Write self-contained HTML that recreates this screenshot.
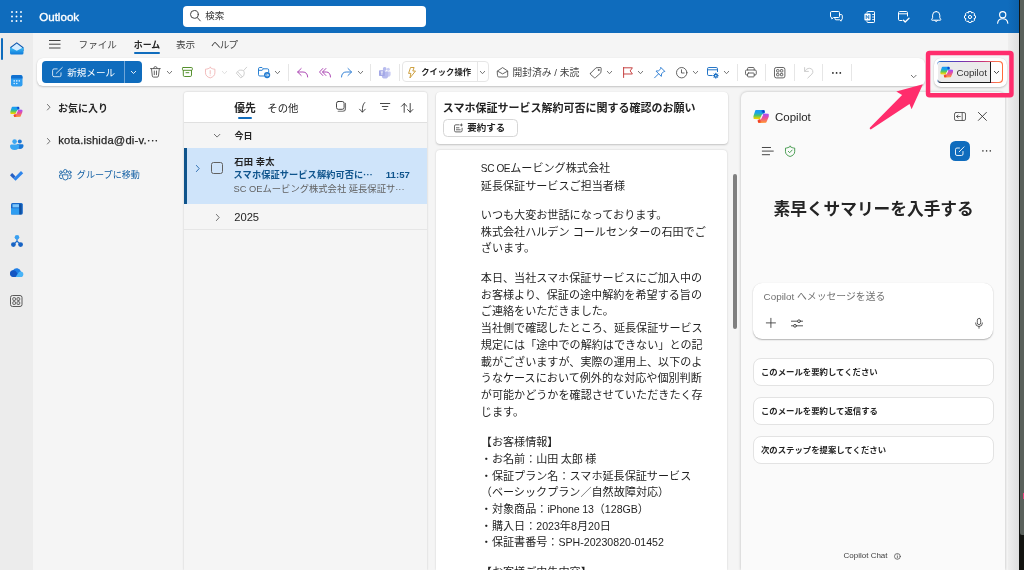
<!DOCTYPE html>
<html lang="ja">
<head>
<meta charset="utf-8">
<title>Outlook</title>
<style>
*{box-sizing:border-box;margin:0;padding:0}
html,body{width:1024px;height:570px;overflow:hidden}
body{position:relative;background:#f5f5f5;font-family:"Liberation Sans","Noto Sans CJK JP",sans-serif;color:#242424;font-size:12px}
#app{position:absolute;left:0;top:0;width:1024px;height:570px;will-change:transform}
.a{position:absolute}
.t{position:absolute;white-space:nowrap;line-height:1}
svg{position:absolute;overflow:visible}
#hdr{position:absolute;left:0;top:0;width:1018.8px;height:32.7px;background:linear-gradient(90deg,#0f6cbd 0,#0f6cbd 1008px,#0c62ad 1018px)}
#search{position:absolute;left:183.2px;top:5.6px;width:242.6px;height:21.6px;background:#fff;border-radius:4px}
#rail{position:absolute;left:0;top:33px;width:33px;height:537px;background:#ececec}
#ribbon{position:absolute;left:37px;top:58px;width:888px;height:28px;background:#fff;border-radius:6px;box-shadow:0 1px 2px rgba(0,0,0,.2),0 0 1px rgba(0,0,0,.12)}
.sep{position:absolute;top:6px;width:1px;height:16.5px;background:#e6e6e6}
#mlist{position:absolute;left:184px;top:92px;width:243px;height:478px;background:#f5f5f5;border-radius:3px 3px 0 0;box-shadow:0 0 2px rgba(0,0,0,.22);overflow:hidden}
#rh{position:absolute;left:436px;top:92px;width:292px;height:52px;background:#fff;border-radius:4px;box-shadow:0 1px 2px rgba(0,0,0,.2),0 0 1px rgba(0,0,0,.12)}
#rb{position:absolute;left:436px;top:150px;width:291px;height:420px;background:#fff;border-radius:4px 4px 0 0;box-shadow:0 0 2px rgba(0,0,0,.18);overflow:hidden}
#rb .p{position:absolute;left:44.8px;font-size:11.1px;line-height:16.7px;color:#1f1f1f;white-space:nowrap}
#rb .l{font-size:10.6px}
#cop{position:absolute;left:741px;top:92px;width:264.2px;height:478px;background:#fafafa;border-radius:6px 6px 0 0;box-shadow:0 0 3px rgba(0,0,0,.25)}
.sug{position:absolute;left:12px;width:241px;height:28px;background:#fff;border:1px solid #e3e3e3;border-radius:8px}
.sug span{position:absolute;left:7px;top:9.4px;font-size:8.4px;font-weight:bold;color:#242424;white-space:nowrap;line-height:1}
</style>
</head>
<body>
<div id="app">
<div class="a" style="left:1007.5px;top:32.7px;width:11.5px;height:537.3px;background:linear-gradient(90deg,#eeeeee,#e8e8e8 40%,#dedede)"></div>
<div class="a" style="left:1018.8px;top:0;width:5.2px;height:570px;background:#121310"></div>
<div class="a" style="left:1019.8px;top:0;width:4.2px;height:534.5px;background:#59605b;border-radius:0 0 0 2px"></div>
<div class="a" style="left:1022.8px;top:492.5px;width:1.2px;height:6.5px;background:#e8407a"></div>
<div id="hdr">
<svg style="left:10.5px;top:10.5px" width="11" height="11" viewBox="0 0 11 11" fill="#fff"><circle cx="1.0" cy="1.0" r="0.95"/><circle cx="1.0" cy="5.5" r="0.95"/><circle cx="1.0" cy="10.0" r="0.95"/><circle cx="5.5" cy="1.0" r="0.95"/><circle cx="5.5" cy="5.5" r="0.95"/><circle cx="5.5" cy="10.0" r="0.95"/><circle cx="10.0" cy="1.0" r="0.95"/><circle cx="10.0" cy="5.5" r="0.95"/><circle cx="10.0" cy="10.0" r="0.95"/></svg>
<div class="t" id="ttl" style="left:39.2px;top:11.2px;color:#fff;font-size:11.6px;-webkit-text-stroke:.35px #fff">Outlook</div>
<div id="search">
<svg style="left:7px;top:4.3px" width="10.6" height="11.5" viewBox="0 0 10.6 11.5" fill="none" stroke="#424242" stroke-width="1" stroke-linecap="round"><circle cx="4.4" cy="4.4" r="3.9"/><path d="M7.3 7.5l3 3.4"/></svg>
<div class="t" style="left:22px;top:5.4px;font-size:9.5px;color:#333">検索</div>
</div>
<svg style="left:830px;top:11px" width="12.5" height="10.5" viewBox="0 0 12.5 10.5" fill="none" stroke="#fff" stroke-width="1" stroke-linejoin="round" stroke-linecap="round"><path d="M.5 1.5a1 1 0 0 1 1-1h7a1 1 0 0 1 1 1v4a1 1 0 0 1-1 1H3.5L1.8 8V6.5h-.3a1 1 0 0 1-1-1z"/><path d="M5 6.6v1.2a1 1 0 0 0 1 1h3.7l1.4 1.4V8.8h.2a1 1 0 0 0 1-1V4.6a1 1 0 0 0-1-1H9.6"/></svg>
<svg style="left:863.5px;top:10.5px" width="11" height="12" viewBox="0 0 11 12" fill="none" stroke="#fff" stroke-width="1" stroke-linejoin="round" stroke-linecap="round"><path d="M3 2V1.2a.7.7 0 0 1 .7-.7h6.1a.7.7 0 0 1 .7.7v9.6a.7.7 0 0 1-.7.7H3.7a.7.7 0 0 1-.7-.7V10"/><path d="M10.5 3.5H8.5M10.5 6H8.5M10.5 8.5H8.5" stroke-width=".8"/><rect x=".4" y="2.6" width="6.2" height="6.8" rx="1" fill="#fff" stroke="none"/><path d="M2.2 7.6V4.4L4.8 7.6V4.4" stroke="#0f6cbd" stroke-width=".9"/></svg>
<svg style="left:898px;top:10.5px" width="11.5" height="12" viewBox="0 0 11.5 12" fill="none" stroke="#fff" stroke-width="1" stroke-linejoin="round" stroke-linecap="round"><path d="M9.5 5V1.7A1.2 1.2 0 0 0 8.3.5H1.7A1.2 1.2 0 0 0 .5 1.7v6.6A1.2 1.2 0 0 0 1.7 9.5H4"/><path d="M.5 2.8h9"/><path d="M5.5 9.3l1.7 1.7L11 7.2" stroke-width="1.3"/></svg>
<svg style="left:931px;top:10.5px" width="10.5" height="12" viewBox="0 0 10.5 12" fill="none" stroke="#fff" stroke-width="1" stroke-linejoin="round" stroke-linecap="round"><path d="M5.2.5a3.6 3.6 0 0 0-3.6 3.6v2.7L.6 8.6a.4.4 0 0 0 .4.6h8.4a.4.4 0 0 0 .4-.6l-1-1.8V4.1A3.6 3.6 0 0 0 5.2.5z"/><path d="M3.9 9.6a1.4 1.4 0 0 0 2.6 0"/></svg>
<svg style="left:963.5px;top:10.5px" width="12" height="12" viewBox="0 0 12 12" fill="none" stroke="#fff" stroke-width="1" stroke-linejoin="round" stroke-linecap="round"><path d="M4.89 0.51L7.11 0.51L7.63 2.02L7.66 2.03L9.09 1.33L10.67 2.91L9.97 4.34L9.98 4.37L11.49 4.89L11.49 7.11L9.98 7.63L9.97 7.66L10.67 9.09L9.09 10.67L7.66 9.97L7.63 9.98L7.11 11.49L4.89 11.49L4.37 9.98L4.34 9.97L2.91 10.67L1.33 9.09L2.03 7.66L2.02 7.63L0.51 7.11L0.51 4.89L2.02 4.37L2.03 4.34L1.33 2.91L2.91 1.33L4.34 2.03L4.37 2.02Z"/><circle cx="6" cy="6" r="1.6"/></svg>
<svg style="left:997px;top:10.5px" width="11.5" height="12.5" viewBox="0 0 11.5 12.5" fill="none" stroke="#fff" stroke-width="1.15" stroke-linecap="round"><circle cx="5.7" cy="3.7" r="3.1"/><path d="M.6 12.2c.3-3 2.3-4.4 5.1-4.4s4.8 1.4 5.1 4.4"/></svg>
</div>
<div id="rail">
<div class="a" style="left:1.2px;top:5px;width:2px;height:21.6px;border-radius:1px;background:#0f6cbd"></div>
<svg style="left:10px;top:8.8px" width="13.5" height="12.6" viewBox="0 0 13.5 12.6" ><defs><linearGradient id="mg" x1="0" y1="0" x2="0" y2="1"><stop offset="0" stop-color="#3fc0f8"/><stop offset="1" stop-color="#0f78d8"/></linearGradient></defs><path d="M0 5.3L6.75.2 13.5 5.3V9H0z" fill="#0c56ad"/><path d="M1.5 5.4L6.75 1.6 12 5.4V9H1.5z" fill="#d4ecff"/><path d="M0 5.3l6.75 3.5 6.75-3.5V11.1a1.5 1.5 0 0 1-1.5 1.5H1.5A1.5 1.5 0 0 1 0 11.1z" fill="url(#mg)"/></svg>
<svg style="left:11px;top:42px" width="11.5" height="11.5" viewBox="0 0 11.5 11.5" ><rect width="11.5" height="11.5" rx="2" fill="#2f9df0"/><path d="M0 2a2 2 0 0 1 2-2h7.5a2 2 0 0 1 2 2v1.5H0z" fill="#1170cf"/><g fill="#d6edff"><circle cx="3.2" cy="5.9" r=".8"/><circle cx="5.75" cy="5.9" r=".8"/><circle cx="8.3" cy="5.9" r=".8"/><circle cx="3.2" cy="8.5" r=".8"/><circle cx="5.75" cy="8.5" r=".8"/></g></svg>
<svg style="left:10.2px;top:73px" width="12.6" height="11.8" viewBox="0 0 16 15" ><defs>
<linearGradient id="ar" x1="0" y1="0" x2="0" y2="1"><stop offset="0" stop-color="#1a9cf2"/><stop offset=".3" stop-color="#1aa6e6"/><stop offset=".6" stop-color="#4cc46a"/><stop offset="1" stop-color="#ecd200"/></linearGradient>
<linearGradient id="br" x1="0" y1="0" x2="0" y2="1"><stop offset="0" stop-color="#a94df2"/><stop offset=".45" stop-color="#ea4f9a"/><stop offset="1" stop-color="#ff8f3a"/></linearGradient>
<radialGradient id="cr" cx="10.6" cy="2.2" r="2.6" gradientUnits="userSpaceOnUse"><stop offset="0" stop-color="#0a38cc"/><stop offset="1" stop-color="#0a38cc" stop-opacity="0"/></radialGradient>
<radialGradient id="dr" cx="5.6" cy="12.6" r="3" gradientUnits="userSpaceOnUse"><stop offset="0" stop-color="#f03a22"/><stop offset="1" stop-color="#f03a22" stop-opacity="0"/></radialGradient>
</defs>
<path d="M10.6 5.2L15 5.5 15 7.4 12.7 12.9 6 13.3 5.4 11.7 8.3 10z" fill="url(#br)" stroke="url(#br)" stroke-width="1.6" stroke-linejoin="round"/>
<path d="M10.6 5.2L15 5.5 15 7.4 12.7 12.9 6 13.3 5.4 11.7 8.3 10z" fill="url(#dr)" stroke="url(#dr)" stroke-width="1.6" stroke-linejoin="round"/>
<path d="M3 1.8L10.9 1.8 11.2 3.4 8.5 4.7 6.3 9.5 1.4 9.3 1.2 7.6z" fill="url(#ar)" stroke="url(#ar)" stroke-width="1.6" stroke-linejoin="round"/>
<path d="M3 1.8L10.9 1.8 11.2 3.4 8.5 4.7 6.3 9.5 1.4 9.3 1.2 7.6z" fill="url(#cr)" stroke="url(#cr)" stroke-width="1.6" stroke-linejoin="round"/>
<path d="M9.3 5.6L10.2 5.7 8 10.2 7 10.5z" fill="#fff"/>
</svg>
<svg style="left:10px;top:106px" width="13.5" height="11" viewBox="0 0 13.5 11" ><circle cx="9.8" cy="2.5" r="2" fill="#1a78d6"/><path d="M6.5 6.5c0-.8.6-1.3 1.3-1.3h4.4c.7 0 1.3.5 1.3 1.3 0 2.2-1.3 3.5-3.5 3.5S6.5 8.7 6.5 6.5z" fill="#1a78d6"/><circle cx="4.6" cy="2.6" r="2.3" fill="#3aa6f2"/><path d="M0 7c0-.9.7-1.5 1.5-1.5h6.2c.8 0 1.5.6 1.5 1.5 0 2.5-1.8 4-4.6 4S0 9.5 0 7z" fill="#3aa6f2"/></svg>
<svg style="left:9.8px;top:137px" width="13.2" height="10.5" viewBox="0 0 13.2 10.5" ><path d="M0 5.3L2.2 3.1 5.6 6.5 3.4 8.7z" fill="#2560c4"/><path d="M3.4 8.7L11 1l2.2 2.2-7.6 7.6z" fill="#2f86ec"/></svg>
<svg style="left:10.6px;top:169.5px" width="11.8" height="11.5" viewBox="0 0 11.8 11.5" ><rect x="0" y="0" width="11.8" height="11.5" rx="1.5" fill="#1668c9"/><rect x="1.5" y="1.2" width="6.5" height="3.2" fill="#7cc6fb"/><rect x="0" y="5.2" width="8.3" height="6.3" fill="#2f9df0"/><rect x="8.3" y="1.2" width="2.2" height="10.3" fill="#0e4e9e"/></svg>
<svg style="left:10.5px;top:201.5px" width="12" height="12" viewBox="0 0 12 12" ><path d="M6 3v3M2.5 9.5L6 6l3.5 3.5" stroke="#1e6fd0" stroke-width="1.2" fill="none"/><circle cx="6" cy="2.3" r="2.3" fill="#3aa0f0"/><circle cx="2.4" cy="9.6" r="2.4" fill="#1763c4"/><circle cx="9.6" cy="9.6" r="2.4" fill="#1763c4"/></svg>
<svg style="left:9.8px;top:234.5px" width="13.4" height="9" viewBox="0 0 13.4 9" ><path d="M3.4 9a3.4 3.4 0 0 1-.4-6.7A4.4 4.4 0 0 1 11 3.8 2.7 2.7 0 0 1 10.8 9z" fill="#1f7fe6"/><path d="M3.4 9a3.4 3.4 0 0 1 0-6.8c1.5 0 2.5.8 3.2 2L9.4 9z" fill="#1456c2"/><path d="M5.6 9l3-4.4a2.7 2.7 0 1 1 2.2 4.4z" fill="#49b4f7"/></svg>
<svg style="left:10.3px;top:262px" width="12.5" height="12" viewBox="0 0 12.5 12" fill="none" stroke="#4a4a4a" stroke-width=".9"><rect x=".5" y=".5" width="11.5" height="11" rx="2"/><rect x="2.8" y="2.7" width="2.7" height="2.7" rx=".7"/><rect x="7" y="2.7" width="2.7" height="2.7" rx=".7"/><rect x="2.8" y="6.7" width="2.7" height="2.7" rx=".7"/><rect x="7" y="6.7" width="2.7" height="2.7" rx=".7"/></svg>
</div>
<svg style="left:49px;top:40px" width="11.5" height="8.5" viewBox="0 0 11.5 8.5" stroke="#424242" stroke-width="1"><path d="M0 .5h11.5M0 4.2h11.5M0 8h11.5"/></svg>
<div class="t" id="tb1" style="left:78.6px;top:39.5px;font-size:9.6px;color:#424242">ファイル</div>
<div class="t" id="tb2" style="left:133.8px;top:41px;font-size:8.9px;font-weight:bold;color:#242424">ホーム</div>
<div class="a" style="left:134px;top:51.5px;width:26px;height:2px;background:#0f6cbd;border-radius:1px"></div>
<div class="t" id="tb3" style="left:176px;top:39.5px;font-size:9.6px;color:#424242">表示</div>
<div class="t" id="tb4" style="left:211px;top:39.5px;font-size:9.6px;letter-spacing:-.8px;color:#424242">ヘルプ</div>
<div id="ribbon">
<div class="a" style="left:5.3px;top:3px;width:99.7px;height:22px;background:#0f6cbd;border-radius:4px"></div><div class="a" style="left:86.6px;top:3px;width:1.2px;height:22px;background:#6fa6d8"></div>

<svg style="left:15.4px;top:8.8px" width="11" height="10.5" viewBox="0 0 11 10.5" fill="none" stroke="#fff" stroke-opacity=".92" stroke-width=".85" stroke-linejoin="round" stroke-linecap="round"><path d="M9 5.8V8.2a1.5 1.5 0 0 1-1.5 1.5H2.1a1.5 1.5 0 0 1-1.5-1.5V3.4a1.5 1.5 0 0 1 1.5-1.5H5.2"/><path d="M4.2 6.4L10.3.5"/></svg>
<div class="t" id="nm" style="left:30.2px;top:10px;font-size:9.6px;color:#fff">新規メール</div>
<svg style="left:93.8px;top:12.9px" width="5" height="2.8" viewBox="0 0 5 2.8" fill="none" stroke="#fff" stroke-width="0.9" stroke-linecap="round" stroke-linejoin="round"><path d="M0.3 0.3L2.5 2.5L4.7 0.3"/></svg>
<svg style="left:113.2px;top:7.9px" width="10.8" height="11.5" viewBox="0 0 10.8 11.5" fill="none" stroke="#4a4a4a" stroke-width=".85" stroke-linejoin="round" stroke-linecap="round"><path d="M.5 2.6h9.8M3.6 2.4a1.8 1.8 0 0 1 3.6 0M1.5 2.8l.8 7.2a1.3 1.3 0 0 0 1.3 1.1h3.6a1.3 1.3 0 0 0 1.3-1.1l.8-7.2M4.3 5v3.7M6.5 5v3.7"/></svg>
<svg style="left:129.8px;top:13.4px" width="5" height="3" viewBox="0 0 5 3" fill="none" stroke="#616161" stroke-width="0.85" stroke-linecap="round" stroke-linejoin="round"><path d="M0.3 0.3L2.5 2.7L4.7 0.3"/></svg>
<svg style="left:144.8px;top:9px" width="10.8" height="10" viewBox="0 0 10.8 10" fill="none" stroke="#4c8a22" stroke-width=".95" stroke-linejoin="round" stroke-linecap="round"><rect x=".5" y=".5" width="9.8" height="2.8" rx=".7"/><path d="M1.3 3.5v4.7a1.3 1.3 0 0 0 1.3 1.3h5.6a1.3 1.3 0 0 0 1.3-1.3V3.5M4 5.7h2.8"/></svg>
<svg style="left:167.6px;top:8.6px" width="10.4" height="11.4" viewBox="0 0 10.4 11.4" fill="none" stroke="#f1b6b6" stroke-width=".9" stroke-linejoin="round" stroke-linecap="round"><path d="M5.2.5C6.5 1.6 8 2.1 9.9 2.2v3.6c0 2.6-1.8 4.3-4.7 5.1C2.3 10.1.5 8.4.5 5.8V2.2C2.4 2.1 3.9 1.6 5.2.5z"/><path d="M5.2 3.6v3M5.2 8.1v.1"/></svg>
<svg style="left:184.7px;top:13.4px" width="5" height="3" viewBox="0 0 5 3" fill="none" stroke="#dcdcdc" stroke-width="0.85" stroke-linecap="round" stroke-linejoin="round"><path d="M0.3 0.3L2.5 2.7L4.7 0.3"/></svg>
<svg style="left:199px;top:8.5px" width="11.2" height="11.5" viewBox="0 0 11.2 11.5" fill="none" stroke="#c8c8c8" stroke-width=".85" stroke-linejoin="round" stroke-linecap="round"><path d="M10.7.2L7.6 3.6M5.2 3.1c1.8-.2 3 1 3.1 2.8L7.8 8.6 4.8 11 .3 6.1 3 3.4zM1.7 4.8l4.5 4.9"/></svg>
<svg style="left:221px;top:8.7px" width="12.8" height="11.6" viewBox="0 0 12.8 11.6" ><path d="M6.5 9H1.8A1.3 1.3 0 0 1 .5 7.7V1.8A1.3 1.3 0 0 1 1.8.5h2.2l1.3 1.3h4.1a1.3 1.3 0 0 1 1.3 1.3V5.5M.5 3.3h3.7l1.1-1.5" fill="none" stroke="#1f7ad1" stroke-width=".95" stroke-linejoin="round"/><circle cx="9.1" cy="8.1" r="3.1" fill="#1f7ad1"/><path d="M7.6 8.1h2.8M9.3 6.9l1.2 1.2-1.2 1.2" fill="none" stroke="#fff" stroke-width=".8" stroke-linecap="round" stroke-linejoin="round"/></svg>
<svg style="left:238.1px;top:13.4px" width="5" height="3" viewBox="0 0 5 3" fill="none" stroke="#616161" stroke-width="0.85" stroke-linecap="round" stroke-linejoin="round"><path d="M0.3 0.3L2.5 2.7L4.7 0.3"/></svg>
<div class="sep" style="left:250.7px"></div>
<svg style="left:259.7px;top:9.5px" width="11.2" height="9.5" viewBox="0 0 11.2 9.5" fill="none" stroke="#a83fb0" stroke-width=".95" stroke-linejoin="round" stroke-linecap="round"><path d="M4.2.5L.6 4l3.6 3.5M.8 4h5.2c2.8 0 4.6 1.8 4.7 5"/></svg>
<svg style="left:281.5px;top:9.5px" width="12" height="9.5" viewBox="0 0 12 9.5" fill="none" stroke="#a83fb0" stroke-width=".95" stroke-linejoin="round" stroke-linecap="round"><path d="M3.8.5L.5 4l3.3 3.5M6.9.5L3.5 4l3.4 3.5M3.8 4h3.5c2.6 0 4.1 1.8 4.2 5"/></svg>
<svg style="left:304px;top:9.5px" width="11.2" height="9.5" viewBox="0 0 11.2 9.5" fill="none" stroke="#2b7cd3" stroke-width=".95" stroke-linejoin="round" stroke-linecap="round"><path d="M7 .5L10.6 4 7 7.5M10.4 4H5.2C2.4 4 .6 5.8.5 9"/></svg>
<svg style="left:320.5px;top:13.4px" width="5" height="3" viewBox="0 0 5 3" fill="none" stroke="#616161" stroke-width="0.85" stroke-linecap="round" stroke-linejoin="round"><path d="M0.3 0.3L2.5 2.7L4.7 0.3"/></svg>
<div class="sep" style="left:333.3px"></div>
<svg style="left:342px;top:8.8px" width="11.6" height="11" viewBox="0 0 11.6 11" ><circle cx="9.3" cy="2.3" r="1.5" fill="#c9ccf3"/><path d="M7.5 4.4h3.3a.8.8 0 0 1 .8.8v2.8a2.1 2.1 0 0 1-4.1 0z" fill="#c9ccf3"/><circle cx="5.7" cy="1.9" r="1.9" fill="#b7bbee"/><path d="M2.8 4.4h5.6a.8.8 0 0 1 .8.8v3.2a3.2 3.2 0 0 1-6.4 0z" fill="#b7bbee"/><rect x="0" y="3.3" width="5.8" height="5.8" rx=".8" fill="#a2a7e6"/><path d="M1.7 4.9h2.4M2.9 4.9v3" stroke="#fff" stroke-width=".8" fill="none"/></svg>
<div class="sep" style="left:361.6px"></div>
<div class="a" style="left:365.4px;top:3.4px;width:86.6px;height:21px;border:1px solid #e6e6e6;border-radius:4px"></div>
<div class="a" style="left:440px;top:3.4px;width:1px;height:21px;background:#e6e6e6"></div>
<svg style="left:371px;top:8.5px" width="8" height="11.5" viewBox="0 0 8 11.5" fill="none" stroke="#c8962e" stroke-width=".9" stroke-linejoin="round"><path d="M2.5.5h3.6L4.8 4h2.7L1.9 11l1-4.6H.6z"/></svg>
<div class="t" id="qa" style="left:384.2px;top:9.8px;font-size:8.3px;font-weight:bold;color:#242424">クイック操作</div>
<svg style="left:443.1px;top:13.4px" width="5" height="3" viewBox="0 0 5 3" fill="none" stroke="#616161" stroke-width="0.85" stroke-linecap="round" stroke-linejoin="round"><path d="M0.3 0.3L2.5 2.7L4.7 0.3"/></svg>
<svg style="left:460.2px;top:9px" width="11.2" height="10.5" viewBox="0 0 11.2 10.5" fill="none" stroke="#4a4a4a" stroke-width=".85" stroke-linejoin="round" stroke-linecap="round"><path d="M.5 4L5.6.6 10.7 4v4.7a1.3 1.3 0 0 1-1.3 1.3H1.8A1.3 1.3 0 0 1 .5 8.7z"/><path d="M.7 4.2l4.9 2.7 4.9-2.7"/></svg>
<div class="t" id="rd" style="left:475.6px;top:9.6px;font-size:9.75px;color:#424242">開封済み / 未読</div>
<svg style="left:552.7px;top:8.8px" width="11.8" height="11" viewBox="0 0 11.8 11" fill="none" stroke="#4a4a4a" stroke-width=".85" stroke-linejoin="round" stroke-linecap="round"><path d="M.6 6.2L6 .8 10.2.5a.9.9 0 0 1 1 1L10.9 5.7 5.5 10.6a.9.9 0 0 1-1.3 0L.6 7.5a.9.9 0 0 1 0-1.3z"/><circle cx="8.6" cy="3" r=".5"/></svg>
<svg style="left:569.5px;top:13.4px" width="5" height="3" viewBox="0 0 5 3" fill="none" stroke="#616161" stroke-width="0.85" stroke-linecap="round" stroke-linejoin="round"><path d="M0.3 0.3L2.5 2.7L4.7 0.3"/></svg>
<svg style="left:585.5px;top:9px" width="10.2" height="11" viewBox="0 0 10.2 11" fill="none" stroke="#c43a3a" stroke-width=".95" stroke-linejoin="round" stroke-linecap="round"><path d="M.6.5v10M.6.8h8.8L7.2 3.9 9.4 7H.6"/></svg>
<svg style="left:601.3px;top:13.4px" width="5" height="3" viewBox="0 0 5 3" fill="none" stroke="#616161" stroke-width="0.85" stroke-linecap="round" stroke-linejoin="round"><path d="M0.3 0.3L2.5 2.7L4.7 0.3"/></svg>
<svg style="left:616.5px;top:8.8px" width="11.4" height="11.4" viewBox="0 0 11.4 11.4" fill="none" stroke="#2b7cd3" stroke-width=".95" stroke-linejoin="round" stroke-linecap="round"><path d="M7 .6l3.8 3.8-1.3.4L7.6 6.8 7.3 9.4 2 4.1l2.6-.3L6.6 1.9zM4.4 7L.6 10.8"/></svg>
<svg style="left:638.6px;top:8.8px" width="11.4" height="11.4" viewBox="0 0 11.4 11.4" fill="none" stroke="#4a4a4a" stroke-width=".85" stroke-linejoin="round" stroke-linecap="round"><circle cx="5.7" cy="5.7" r="5.2"/><path d="M5.5 2.8v3.2h2.6"/></svg>
<svg style="left:655.5px;top:13.4px" width="5" height="3" viewBox="0 0 5 3" fill="none" stroke="#616161" stroke-width="0.85" stroke-linecap="round" stroke-linejoin="round"><path d="M0.3 0.3L2.5 2.7L4.7 0.3"/></svg>
<svg style="left:670.2px;top:8.8px" width="12" height="11.5" viewBox="0 0 12 11.5" ><path d="M5.5 8.5H1.8A1.3 1.3 0 0 1 .5 7.2V1.8A1.3 1.3 0 0 1 1.8.5h7.4a1.3 1.3 0 0 1 1.3 1.3V5M.5 2.8h10" fill="none" stroke="#1a6fc4" stroke-width=".95"/><circle cx="8.8" cy="8.7" r="2.1" fill="#1a6fc4"/><path d="M8.8 5.8v5.8M5.9 8.7h5.8M6.8 6.7l4 4M10.8 6.7l-4 4" stroke="#1a6fc4" stroke-width="1"/><circle cx="8.8" cy="8.7" r=".8" fill="#fff"/></svg>
<svg style="left:687.3px;top:13.4px" width="5" height="3" viewBox="0 0 5 3" fill="none" stroke="#616161" stroke-width="0.85" stroke-linecap="round" stroke-linejoin="round"><path d="M0.3 0.3L2.5 2.7L4.7 0.3"/></svg>
<div class="sep" style="left:699.5px"></div>
<svg style="left:708px;top:9.2px" width="11.8" height="10.4" viewBox="0 0 11.8 10.4" fill="none" stroke="#4a4a4a" stroke-width=".85" stroke-linejoin="round" stroke-linecap="round"><path d="M2.6 3V1.5a1 1 0 0 1 1-1h4.6a1 1 0 0 1 1 1V3M2.6 8H1.7A1.2 1.2 0 0 1 .5 6.8V4.2A1.2 1.2 0 0 1 1.7 3h8.4a1.2 1.2 0 0 1 1.2 1.2v2.6A1.2 1.2 0 0 1 10.1 8H9.2"/><rect x="2.6" y="6" width="6.6" height="3.9" rx=".8"/></svg>
<div class="sep" style="left:728px"></div>
<svg style="left:737px;top:8.8px" width="11.4" height="11.4" viewBox="0 0 11.4 11.4" fill="none" stroke="#4a4a4a" stroke-width=".85"><rect x=".5" y=".5" width="10.4" height="10.4" rx="1.8"/><rect x="2.6" y="2.6" width="2.4" height="2.4" rx=".6"/><rect x="6.4" y="2.6" width="2.4" height="2.4" rx=".6"/><rect x="2.6" y="6.4" width="2.4" height="2.4" rx=".6"/><rect x="6.4" y="6.4" width="2.4" height="2.4" rx=".6"/></svg>
<div class="sep" style="left:756.5px"></div>
<svg style="left:766.9px;top:8.8px" width="9.4" height="11.4" viewBox="0 0 9.4 11.4" fill="none" stroke="#c6c6c6" stroke-width=".9" stroke-linejoin="round" stroke-linecap="round"><path d="M.6.6v3.8h3.8M.8 4.2C2 2.3 3.6 1.3 5.5 1.3a3.4 3.4 0 0 1 2.4 5.8L3.8 11"/></svg>
<div class="sep" style="left:785px"></div>
<svg style="left:795.2px;top:13.6px" width="9.2" height="1.8" viewBox="0 0 9.2 1.8" fill="#242424"><circle cx=".9" cy=".9" r=".9"/><circle cx="4.6" cy=".9" r=".9"/><circle cx="8.3" cy=".9" r=".9"/></svg>
<div class="sep" style="left:813.7px"></div>
<svg style="left:874.1px;top:16.7px" width="5.4" height="3" viewBox="0 0 5.4 3" fill="none" stroke="#616161" stroke-width="0.9" stroke-linecap="round" stroke-linejoin="round"><path d="M0.3 0.3L2.7 2.7L5.1 0.3"/></svg>
</div>
<div class="a" style="left:933.5px;top:57.5px;width:73px;height:29px;background:#fff;border-radius:7px;box-shadow:0 1px 2px rgba(0,0,0,.2),0 0 1px rgba(0,0,0,.12)"></div>
<div class="a" style="left:936.7px;top:60.9px;width:66.6px;height:22.1px;border-radius:4px;background:linear-gradient(90deg,#1a62c4 0%,#1a62c4 4%,#6a35b8 35%,#c8327a 70%,#ff7a4a 92%,#ff6a3a 100%)"></div>
<div class="a" style="left:937.4px;top:61.8px;width:65px;height:20.4px;border-radius:3.4px;background:#fff"></div>
<div class="a" style="left:937.6px;top:61.9px;width:53.3px;height:21.1px;border-radius:3px 0 0 3.5px;background:#ebebeb;border-right:1px solid #1b1b1b;border-bottom:1px solid #1b1b1b"></div>
<svg style="left:939.8px;top:66px" width="13.2" height="12.3" viewBox="0 0 16 15" ><defs>
<linearGradient id="ab" x1="0" y1="0" x2="0" y2="1"><stop offset="0" stop-color="#1a9cf2"/><stop offset=".3" stop-color="#1aa6e6"/><stop offset=".6" stop-color="#4cc46a"/><stop offset="1" stop-color="#ecd200"/></linearGradient>
<linearGradient id="bb" x1="0" y1="0" x2="0" y2="1"><stop offset="0" stop-color="#a94df2"/><stop offset=".45" stop-color="#ea4f9a"/><stop offset="1" stop-color="#ff8f3a"/></linearGradient>
<radialGradient id="cb" cx="10.6" cy="2.2" r="2.6" gradientUnits="userSpaceOnUse"><stop offset="0" stop-color="#0a38cc"/><stop offset="1" stop-color="#0a38cc" stop-opacity="0"/></radialGradient>
<radialGradient id="db" cx="5.6" cy="12.6" r="3" gradientUnits="userSpaceOnUse"><stop offset="0" stop-color="#f03a22"/><stop offset="1" stop-color="#f03a22" stop-opacity="0"/></radialGradient>
</defs>
<path d="M10.6 5.2L15 5.5 15 7.4 12.7 12.9 6 13.3 5.4 11.7 8.3 10z" fill="url(#bb)" stroke="url(#bb)" stroke-width="1.6" stroke-linejoin="round"/>
<path d="M10.6 5.2L15 5.5 15 7.4 12.7 12.9 6 13.3 5.4 11.7 8.3 10z" fill="url(#db)" stroke="url(#db)" stroke-width="1.6" stroke-linejoin="round"/>
<path d="M3 1.8L10.9 1.8 11.2 3.4 8.5 4.7 6.3 9.5 1.4 9.3 1.2 7.6z" fill="url(#ab)" stroke="url(#ab)" stroke-width="1.6" stroke-linejoin="round"/>
<path d="M3 1.8L10.9 1.8 11.2 3.4 8.5 4.7 6.3 9.5 1.4 9.3 1.2 7.6z" fill="url(#cb)" stroke="url(#cb)" stroke-width="1.6" stroke-linejoin="round"/>
<path d="M9.3 5.6L10.2 5.7 8 10.2 7 10.5z" fill="#fff"/>
</svg>
<div class="t" id="cpb" style="left:956.4px;top:67.6px;font-size:9.8px;color:#333">Copilot</div>
<svg style="left:994.3px;top:71.2px" width="5" height="2.8" viewBox="0 0 5 2.8" fill="none" stroke="#424242" stroke-width="0.95" stroke-linecap="round" stroke-linejoin="round"><path d="M0.3 0.3L2.5 2.5L4.7 0.3"/></svg>
<svg style="left:46.7px;top:104.3px" width="3.4" height="6.4" viewBox="0 0 3.4 6.4" fill="none" stroke="#616161" stroke-width="0.9" stroke-linecap="round" stroke-linejoin="round"><path d="M0.4 0.4L3.0 3.2L0.4 6.0"/></svg>
<div class="t" id="nv1" style="left:58.1px;top:103.8px;font-size:10px;font-weight:bold;color:#242424">お気に入り</div>
<svg style="left:46.7px;top:137.7px" width="3.4" height="6.4" viewBox="0 0 3.4 6.4" fill="none" stroke="#616161" stroke-width="0.9" stroke-linecap="round" stroke-linejoin="round"><path d="M0.4 0.4L3.0 3.2L0.4 6.0"/></svg>
<div class="t" id="nv2" style="left:58.2px;top:135.2px;font-size:11.2px;letter-spacing:.2px;color:#242424;-webkit-text-stroke:.25px #242424">kota.ishida@di-v.···</div>
<svg style="left:59px;top:169px" width="12.6" height="11.4" viewBox="0 0 12.6 11.4" fill="none" stroke="#115ea3" stroke-width=".85" stroke-linejoin="round" stroke-linecap="round"><circle cx="6.3" cy="2.3" r="1.8"/><circle cx="1.9" cy="3.3" r="1.3"/><circle cx="10.7" cy="3.3" r="1.3"/><path d="M3.7 5.8h5.2v2.6a2.6 2.6 0 0 1-5.2 0zM2.2 6H.5v1.8a1.9 1.9 0 0 0 2.2 1.9M10.4 6h1.7v1.8a1.9 1.9 0 0 1-2.2 1.9"/></svg>
<div class="t" id="nv3" style="left:76.8px;top:171px;font-size:9.1px;color:#115ea3">グループに移動</div>
<div id="mlist">
<div class="a" style="left:0;top:0;width:243px;height:30px;background:#fff"></div>
<div class="a" style="left:0;top:30px;width:243px;height:1px;background:#e0e0e0"></div>
<div class="t" id="ml1" style="left:50.2px;top:11px;font-size:10.8px;font-weight:bold;color:#242424">優先</div>
<div class="a" style="left:54.2px;top:24.6px;width:13.6px;height:2px;border-radius:1px;background:#0f6cbd"></div>
<div class="t" id="ml2" style="left:83.3px;top:11.6px;font-size:10.4px;color:#242424">その他</div>
<svg style="left:152px;top:9.2px" width="10" height="10.8" viewBox="0 0 10 10.8" fill="none" stroke="#333" stroke-width=".9" stroke-linejoin="round" stroke-linecap="round"><rect x=".5" y=".5" width="7.6" height="7.8" rx="1.8"/><path d="M2.2 10.2h4.7a2.6 2.6 0 0 0 2.6-2.6V2.4" stroke-width="1.1" stroke="#777"/></svg>
<svg style="left:175.2px;top:10px" width="6.8" height="10.6" viewBox="0 0 6.8 10.6" fill="none" stroke="#333" stroke-width=".9" stroke-linejoin="round" stroke-linecap="round"><path d="M5.8.5C4 2.4 3.3 4.4 3.4 10M.5 7.2l2.9 2.9 2.9-2.9"/></svg>
<svg style="left:196px;top:11px" width="10.2" height="7" viewBox="0 0 10.2 7" fill="none" stroke="#333" stroke-width=".9" stroke-linejoin="round" stroke-linecap="round"><path d="M.4.5h9.4M2.3 3.5h5.6M3.8 6.5h2.6"/></svg>
<svg style="left:217px;top:10.6px" width="12.4" height="9.8" viewBox="0 0 12.4 9.8" fill="none" stroke="#333" stroke-width=".9" stroke-linejoin="round" stroke-linecap="round"><path d="M3.2 9.3V.6M.5 3.3L3.2.6l2.7 2.7M9.2.5v8.7M6.5 6.5l2.7 2.7 2.7-2.7"/></svg>
<svg style="left:30.3px;top:41.9px" width="6.2" height="3.4" viewBox="0 0 6.2 3.4" fill="none" stroke="#616161" stroke-width="0.9" stroke-linecap="round" stroke-linejoin="round"><path d="M0.3 0.3L3.1 3.1L5.9 0.3"/></svg>
<div class="t" id="ml3" style="left:50.4px;top:40.1px;font-size:9px;font-weight:bold;color:#242424">今日</div>
<div class="a" style="left:0;top:56.2px;width:243px;height:55.5px;background:#cfe4fa"></div>
<div class="a" style="left:0;top:56.2px;width:2.8px;height:55.5px;background:#0f548c"></div>
<svg style="left:12.4px;top:72.7px" width="3.6" height="7" viewBox="0 0 3.6 7" fill="none" stroke="#2b6cb0" stroke-width="0.95" stroke-linecap="round" stroke-linejoin="round"><path d="M0.4 0.4L3.2 3.5L0.4 6.6"/></svg>
<div class="a" style="left:27.2px;top:70.2px;width:11.8px;height:11.4px;border:1px solid #616161;border-radius:2.5px"></div>
<div class="t" id="ml4" style="left:50.2px;top:65.7px;letter-spacing:.15px;font-size:9.3px;font-weight:bold;color:#242424">石田 幸太</div>
<div class="t" id="ml5" style="left:49.6px;top:79.3px;letter-spacing:.1px;font-size:9.2px;font-weight:bold;color:#0f548c">スマホ保証サービス解約可否に···</div>
<div class="t" id="ml6" style="left:201.8px;top:77.6px;font-size:9.6px;font-weight:bold;color:#0f548c">11:57</div>
<div class="t" id="ml7" style="left:49.6px;top:93.2px;font-size:9.3px;color:#616161">SC OEムービング株式会社 延長保証サ···</div>
<svg style="left:31.8px;top:121.5px" width="3.6" height="7" viewBox="0 0 3.6 7" fill="none" stroke="#616161" stroke-width="0.9" stroke-linecap="round" stroke-linejoin="round"><path d="M0.4 0.4L3.2 3.5L0.4 6.6"/></svg>
<div class="t" id="ml8" style="left:50.2px;top:119.5px;font-size:11.2px;color:#242424">2025</div>
<div class="a" style="left:0;top:137px;width:243px;height:1px;background:#e6e6e6"></div>
</div>
<div id="rh">
<div class="t" id="rh1" style="left:6.8px;top:10.8px;font-size:11px;font-weight:bold;color:#242424">スマホ保証サービス解約可否に関する確認のお願い</div>
<div class="a" style="left:6.6px;top:27.2px;width:75px;height:18px;border:1px solid #d6d6d6;border-radius:4.5px;background:#fff"></div>
<svg style="left:18.2px;top:31px" width="9" height="9.4" viewBox="0 0 9 9.4" fill="none" stroke="#4a4a4a" stroke-width=".85" stroke-linejoin="round" stroke-linecap="round"><path d="M5 1.8H1.8A1.3 1.3 0 0 0 .5 3.1v4.5a1.3 1.3 0 0 0 1.3 1.3h5a1.3 1.3 0 0 0 1.3-1.3V5.2M2.4 4.8h2.6M2.4 6.8h3.8" stroke-width=".85"/><path d="M7.3 0l.5 1.4 1.4.5-1.4.5-.5 1.4-.5-1.4-1.4-.5 1.4-.5z" fill="#424242" stroke="none"/></svg>
<div class="t" id="rh2" style="left:31.2px;top:31.2px;font-size:9.5px;font-weight:bold;color:#242424">要約する</div>
</div>
<div id="rb">
<div class="p" style="top:10.0px"><span class="l" style="font-size:10.1px;letter-spacing:-.4px">SC OE</span>ムービング株式会社<br>延長保証サービスご担当者様</div>
<div class="p" style="top:57.0px">いつも大変お世話になっております。<br>株式会社ハルデン コールセンターの石田でご<br>ざいます。</div>
<div class="p" style="top:120.0px">本日、当社スマホ保証サービスにご加入中の<br>お客様より、保証の途中解約を希望する旨の<br>ご連絡をいただきました。<br>当社側で確認したところ、延長保証サービス<br>規定には「途中での解約はできない」との記<br>載がございますが、実際の運用上、以下のよ<br>うなケースにおいて例外的な対応や個別判断<br>が可能かどうかを確認させていただきたく存<br>じます。</div>
<div class="p" style="top:284.1px">【お客様情報】<br><span style="word-spacing:-.8px">・お名前：山田 太郎 様</span><br>・保証プラン名：スマホ延長保証サービス<br>（ベーシックプラン／自然故障対応）<br>・対象商品：<span class="l" style="letter-spacing:-.15px">iPhone 13</span>（<span class="l">128GB</span>）<br>・購入日：<span class="l">2023</span>年<span class="l">8</span>月<span class="l">20</span>日<br>・保証書番号：<span class="l">SPH-20230820-01452</span></div>
<div class="p" style="top:413.9px">【お客様ご申告内容】</div>
</div>
<div class="a" style="left:733.2px;top:173.5px;width:4px;height:155px;border-radius:2px;background:#7f7f7f"></div>
<div id="cop">
<svg style="left:12px;top:17px" width="16" height="15" viewBox="0 0 16 15" ><defs>
<linearGradient id="ap" x1="0" y1="0" x2="0" y2="1"><stop offset="0" stop-color="#1a9cf2"/><stop offset=".3" stop-color="#1aa6e6"/><stop offset=".6" stop-color="#4cc46a"/><stop offset="1" stop-color="#ecd200"/></linearGradient>
<linearGradient id="bp" x1="0" y1="0" x2="0" y2="1"><stop offset="0" stop-color="#a94df2"/><stop offset=".45" stop-color="#ea4f9a"/><stop offset="1" stop-color="#ff8f3a"/></linearGradient>
<radialGradient id="cp" cx="10.6" cy="2.2" r="2.6" gradientUnits="userSpaceOnUse"><stop offset="0" stop-color="#0a38cc"/><stop offset="1" stop-color="#0a38cc" stop-opacity="0"/></radialGradient>
<radialGradient id="dp" cx="5.6" cy="12.6" r="3" gradientUnits="userSpaceOnUse"><stop offset="0" stop-color="#f03a22"/><stop offset="1" stop-color="#f03a22" stop-opacity="0"/></radialGradient>
</defs>
<path d="M10.6 5.2L15 5.5 15 7.4 12.7 12.9 6 13.3 5.4 11.7 8.3 10z" fill="url(#bp)" stroke="url(#bp)" stroke-width="1.6" stroke-linejoin="round"/>
<path d="M10.6 5.2L15 5.5 15 7.4 12.7 12.9 6 13.3 5.4 11.7 8.3 10z" fill="url(#dp)" stroke="url(#dp)" stroke-width="1.6" stroke-linejoin="round"/>
<path d="M3 1.8L10.9 1.8 11.2 3.4 8.5 4.7 6.3 9.5 1.4 9.3 1.2 7.6z" fill="url(#ap)" stroke="url(#ap)" stroke-width="1.6" stroke-linejoin="round"/>
<path d="M3 1.8L10.9 1.8 11.2 3.4 8.5 4.7 6.3 9.5 1.4 9.3 1.2 7.6z" fill="url(#cp)" stroke="url(#cp)" stroke-width="1.6" stroke-linejoin="round"/>
<path d="M9.3 5.6L10.2 5.7 8 10.2 7 10.5z" fill="#fff"/>
</svg>
<div class="t" id="cp1" style="left:34px;top:20.2px;font-size:11.5px;color:#242424">Copilot</div>
<svg style="left:213.2px;top:20.1px" width="12" height="9" viewBox="0 0 12 9" fill="none" stroke="#4a4a4a" stroke-width=".85" stroke-linejoin="round" stroke-linecap="round"><rect x=".5" y=".5" width="11" height="8" rx="1.5"/><path d="M8.2.6v7.8M6.3 4.5H2.6M4.1 3L2.6 4.5 4.1 6"/></svg>
<svg style="left:237px;top:20.3px" width="8.8" height="8.8" viewBox="0 0 8.8 8.8" fill="none" stroke="#333" stroke-width=".9" stroke-linecap="round"><path d="M.4.4l8 8M8.4.4l-8 8"/></svg>
<svg style="left:21.2px;top:54.9px" width="11.4" height="8.2" viewBox="0 0 11.4 8.2" fill="none" stroke="#333" stroke-width=".9" stroke-linecap="round"><path d="M.3.5h8.3M.3 4.1h11M.3 7.7h7.3"/></svg>
<svg style="left:43.9px;top:53.8px" width="10.2" height="11" viewBox="0 0 10.2 11" fill="none" stroke="#2f8f3a" stroke-width=".85" stroke-linejoin="round" stroke-linecap="round"><path d="M5.1.5C6.4 1.5 7.9 2 9.7 2.1v3.5c0 2.5-1.8 4.1-4.6 4.9C2.3 9.7.5 8.1.5 5.6V2.1C2.3 2 3.8 1.5 5.1.5z"/><path d="M3.3 5.3l1.4 1.4 2.4-2.6"/></svg>
<div class="a" style="left:209.2px;top:49.3px;width:19.8px;height:19.8px;border-radius:5.5px;background:#0f6cbd"></div>
<svg style="left:214.3px;top:54.2px" width="9.6" height="9.8" viewBox="0 0 9.6 9.8" fill="none" stroke="#fff" stroke-width=".9" stroke-linejoin="round" stroke-linecap="round"><path d="M8 5.5V8a1.5 1.5 0 0 1-1.5 1.5H2A1.5 1.5 0 0 1 .5 8V3.5A1.5 1.5 0 0 1 2 2H4.5"/><path d="M4.2 5.8L9 .9"/></svg>
<svg style="left:240.8px;top:58.3px" width="9.2" height="1.8" viewBox="0 0 9.2 1.8" fill="#424242"><circle cx=".9" cy=".9" r=".8"/><circle cx="4.6" cy=".9" r=".8"/><circle cx="8.3" cy=".9" r=".8"/></svg>
<div class="t" id="cp2" style="left:32.5px;top:110.3px;font-size:16.7px;font-weight:bold;color:#242424">素早くサマリーを入手する</div>
<div class="a" style="left:12px;top:190.9px;width:240.4px;height:56px;border-radius:9px;background:#fff;box-shadow:0 1px 1.5px rgba(0,0,0,.28),0 0 1px rgba(0,0,0,.1)"></div>
<div class="t" id="cp3" style="left:22.6px;top:199.5px;font-size:9.85px;color:#707070">Copilot へメッセージを送る</div>
<svg style="left:24.9px;top:226.2px" width="9.8" height="9.8" viewBox="0 0 9.8 9.8" fill="none" stroke="#424242" stroke-width=".9" stroke-linecap="round"><path d="M4.9.3v9.2M.3 4.9h9.2"/></svg>
<svg style="left:50.2px;top:226.6px" width="12" height="9" viewBox="0 0 12 9" fill="none" stroke="#424242" stroke-width=".9" stroke-linecap="round"><path d="M.4 2.2h6.2M9.4 2.2h2.2M.4 6.8h2.2M5.4 6.8h6.2"/><circle cx="8" cy="2.2" r="1.4"/><circle cx="4" cy="6.8" r="1.4"/></svg>
<svg style="left:233.6px;top:225.7px" width="8" height="10.6" viewBox="0 0 8 10.6" fill="none" stroke="#424242" stroke-width=".85" stroke-linecap="round"><rect x="2.3" y=".4" width="3.4" height="6.2" rx="1.7"/><path d="M.5 5a3.5 3.5 0 0 0 7 0M4 8.5v1.8"/></svg>
<div class="sug" style="top:266px"><span id="sg0">このメールを要約してください</span></div>
<div class="sug" style="top:305px"><span id="sg1">このメールを要約して返信する</span></div>
<div class="sug" style="top:343.8px"><span id="sg2">次のステップを提案してください</span></div>
<div class="t" id="cp4" style="left:102.5px;top:460px;font-size:8px;color:#424242">Copilot Chat</div>
<svg style="left:153.2px;top:460.6px" width="6.8" height="6.8" viewBox="0 0 6.8 6.8" fill="none" stroke="#424242" stroke-width=".7" stroke-linecap="round"><circle cx="3.4" cy="3.4" r="2.9"/><path d="M3.4 3.2v1.7M3.4 1.9v.1"/></svg>
</div>
<svg style="left:920px;top:45px" width="100" height="60" viewBox="0 0 100 60" ><rect x="8.05" y="8.05" width="83.4" height="42.3" rx="1.5" fill="none" stroke="#ff2d6c" stroke-width="4.5"/></svg>
<svg style="left:860px;top:76px" width="80" height="60" viewBox="0 0 80 60" ><path d="M62.9 8.2L36.3 15.6 42.1 18.9 10 51.5a1.1 1.1 0 0 0 1.5 1.6L49.5 27.9 51.6 33.2z" fill="#ff2d6c"/></svg>
</div>
</body>
</html>
